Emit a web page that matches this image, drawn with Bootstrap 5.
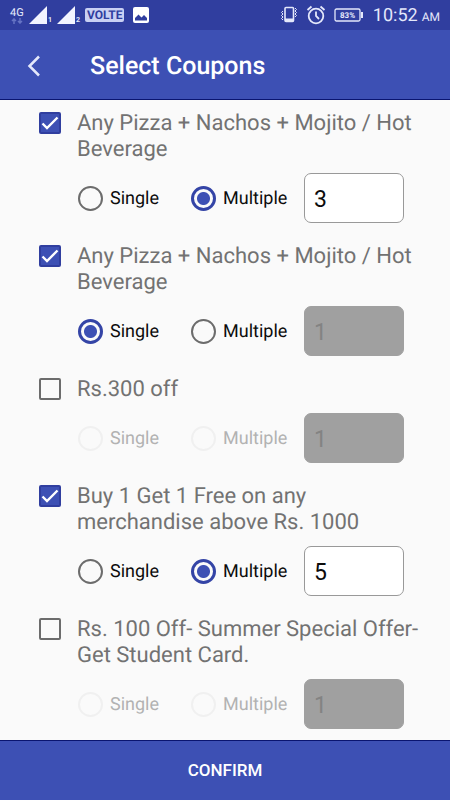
<!DOCTYPE html>
<html lang="en">
<head>
<meta charset="utf-8">
<meta name="viewport" content="width=device-width, initial-scale=1">
<title>Select Coupons</title>
<link href="https://cdn.jsdelivr.net/npm/bootstrap@5.3.0/dist/css/bootstrap.min.css" rel="stylesheet">
<style>
:root { --brand: #3d50b4; --brand-dark: #303e9f; --edge: #0a1570; --ink-soft: #727272; }
body { font-family: Roboto, "Liberation Sans", sans-serif; background: #fafafa; text-rendering: geometricPrecision; }
.statusbar { background: var(--brand-dark); height: 30px; padding: 0 10px; color: #e4e8fb; }
.statusbar svg { display: block; flex: none; }
.net { width: 15px; font-size: 11px; line-height: 11px; }
.sim { font-size: 7px; line-height: 8px; font-weight: 700; width: 6px; padding-left: 1px; }
.volte { background: #c9d0f3; color: var(--brand-dark); font-size: 12px; line-height: 14px; font-weight: 700; border-radius: 2px; padding: 0 2px; }
.clock { font-size: 18px; line-height: 24px; margin-left: 10px; gap: 4px; padding-top: 2px; }
.clock small { font-size: 12px; }
.appbar { background: var(--brand); height: 70px; border-bottom: 1px solid var(--edge); padding: 2px 22px 0; }
.back { width: 24px; height: 40px; color: #e4e8fb; }
.appbar h1 { font-size: 25px; line-height: 30px; font-weight: 500; margin-left: 44px; padding-top: 3px; }
.coupons { padding: 10px 12px 10px 39px; gap: 20px; }
.coupon { border: 0; gap: 10px; }
.offer { gap: 16px; }
.offer-name { font-size: 22px; line-height: 26px; padding-top: 1px; color: var(--ink-soft); }
.form-check-input { flex: none; margin: 0; background-color: transparent; }
.tick { width: 22px; height: 22px; margin-top: 2px; border: 2px solid #6c6c6c; }
.form-check-input.tick { border-radius: 2px; }
.tick:checked { background-color: var(--brand); border-color: var(--brand-dark);
  background-image: url("data:image/svg+xml,%3Csvg xmlns='http://www.w3.org/2000/svg' viewBox='0 0 18 18'%3E%3Cpath d='M1.5 9.5l4.5 4.5L16.500 3.500' fill='none' stroke='white' stroke-width='2.400'/%3E%3C/svg%3E"); }
.usage { padding-left: 39px; }
.choice { flex: 0 0 113px; gap: 7px; font-size: 18px; line-height: 24px; color: #0c0c0c; }
.choice label { padding-top: 2px; }
.dial { width: 25px; height: 25px; border: 2px solid #6c6c6c; }
.dial:checked { background-color: transparent; border: 3px solid #3444a6;
  background-image: radial-gradient(circle, var(--brand) 6px, transparent 7px); }
.form-check-input.dial:disabled { opacity: 1; border-color: #f0f0f0; }
.dial:disabled + label { color: #b2b2b2; }
.amount { width: 100px; height: 50px; font-size: 23px; padding: 3px 9px 0; border: 1px solid #999; border-radius: 7px; color: #0c0c0c; background: #fff; }
.amount:disabled { background: #a0a0a0; border-color: #a0a0a0; color: #838383; }
.confirm { background: var(--brand); color: #fff; height: 60px; border: 0; border-top: 1px solid var(--edge); font-size: 17px; font-weight: 500; }
</style>
<script src="https://cdn.jsdelivr.net/npm/bootstrap@5.3.0/dist/js/bootstrap.bundle.min.js"></script>
</head>
<body class="d-flex flex-column min-vh-100">
<div class="statusbar d-flex align-items-center justify-content-between">
  <div class="d-flex align-items-center">
    <div class="net">4G
      <svg width="14" height="6" viewBox="0 0 14 6" fill="none" stroke="#6674c4" stroke-width="1.500"><path d="M4 6V1M2 3l2-2 2 2M10 0v5M8 3l2 2 2-2"/></svg>
    </div>
    <div class="d-flex align-items-end ms-1"><svg width="18" height="18" viewBox="0 0 18 18"><path d="M0 18L18 0v18z" fill="#f2f4ff"/></svg><span class="sim">1</span></div>
    <div class="d-flex align-items-end ms-1"><svg width="18" height="18" viewBox="0 0 18 18"><path d="M0 18L18 0v18z" fill="#f2f4ff"/></svg><span class="sim">2</span></div>
    <span class="volte ms-1">VOLTE</span>
    <svg class="ms-2" width="18" height="18" viewBox="0 0 18 18"><rect x="1" y="1" width="16" height="16" rx="2" fill="#fff"/><path d="M3 14.500V12l3.500-3.500 3 3L12 9l3 3v2.500z" fill="#303e9f"/></svg>
  </div>
  <div class="d-flex align-items-center">
    <svg width="18" height="18" viewBox="0 0 18 18" fill="none" stroke="#e4e8fb"><rect x="5" y="1.500" width="8.500" height="14" rx="1" stroke-width="1.600"/><path d="M5 14h8.500" stroke-width="3"/><path d="M3 5L1.500 6.500 3 8l-1.500 1.500L3 11l-1.500 1.500L3 14M15 2l1.500 1.500L15 5l1.500 1.500L15 8l1.500 1.500L15 11"/></svg>
    <svg class="ms-2" width="20" height="20" viewBox="0 0 20 20" fill="none" stroke="#e4e8fb" stroke-width="1.800"><circle cx="10" cy="11" r="7.300"/><path d="M10 6.500V11l3 3M1.500 5L5.500 1.500M18.500 5l-4-3.500"/></svg>
    <svg class="ms-2" width="29" height="14" viewBox="0 0 29 14"><rect x="1" y="1" width="25" height="12" rx="1.500" fill="none" stroke="#e4e8fb" stroke-width="1.300"/><path d="M27 4h2v6h-2z" fill="#e4e8fb"/><text x="13.500" y="10" text-anchor="middle" font-family="Roboto, sans-serif" font-size="8" font-weight="700" fill="#e4e8fb">83%</text></svg>
    <div class="clock d-flex align-items-baseline"><span>10:52</span><small>AM</small></div>
  </div>
</div>
<header class="appbar d-flex align-items-center">
  <button type="button" class="back btn p-0 border-0 d-flex align-items-center justify-content-center" aria-label="Back">
    <svg width="14" height="22" viewBox="0 0 14 22" fill="none" stroke="currentColor" stroke-width="2.500"><path d="M12 1.500L2.500 11 12 20.500"/></svg>
  </button>
  <h1 class="mb-0 text-white">Select Coupons</h1>
</header>
<form class="d-flex flex-column flex-grow-1">
  <main class="coupons d-flex flex-column flex-grow-1">
    <section class="coupon d-flex flex-column">
      <div class="offer d-flex align-items-start"><input class="form-check-input tick" type="checkbox" id="c1" checked><label class="offer-name" for="c1">Any Pizza + Nachos + Mojito / Hot Beverage</label></div>
      <div class="usage d-flex align-items-center">
        <div class="choice d-flex align-items-center"><input class="form-check-input dial" type="radio" name="u1" id="s1"><label for="s1">Single</label></div>
        <div class="choice d-flex align-items-center"><input class="form-check-input dial" type="radio" name="u1" id="m1" checked><label for="m1">Multiple</label></div>
        <input class="amount" type="text" inputmode="numeric" value="3" aria-label="Quantity">
      </div>
    </section>
    <section class="coupon d-flex flex-column">
      <div class="offer d-flex align-items-start"><input class="form-check-input tick" type="checkbox" id="c2" checked><label class="offer-name" for="c2">Any Pizza + Nachos + Mojito / Hot Beverage</label></div>
      <div class="usage d-flex align-items-center">
        <div class="choice d-flex align-items-center"><input class="form-check-input dial" type="radio" name="u2" id="s2" checked><label for="s2">Single</label></div>
        <div class="choice d-flex align-items-center"><input class="form-check-input dial" type="radio" name="u2" id="m2"><label for="m2">Multiple</label></div>
        <input class="amount" type="text" inputmode="numeric" value="1" aria-label="Quantity" disabled>
      </div>
    </section>
    <section class="coupon d-flex flex-column">
      <div class="offer d-flex align-items-start"><input class="form-check-input tick" type="checkbox" id="c3"><label class="offer-name" for="c3">Rs.300 off</label></div>
      <div class="usage d-flex align-items-center">
        <div class="choice d-flex align-items-center"><input class="form-check-input dial" type="radio" name="u3" id="s3" disabled><label for="s3">Single</label></div>
        <div class="choice d-flex align-items-center"><input class="form-check-input dial" type="radio" name="u3" id="m3" disabled><label for="m3">Multiple</label></div>
        <input class="amount" type="text" inputmode="numeric" value="1" aria-label="Quantity" disabled>
      </div>
    </section>
    <section class="coupon d-flex flex-column">
      <div class="offer d-flex align-items-start"><input class="form-check-input tick" type="checkbox" id="c4" checked><label class="offer-name" for="c4">Buy 1 Get 1 Free on any merchandise above Rs. 1000</label></div>
      <div class="usage d-flex align-items-center">
        <div class="choice d-flex align-items-center"><input class="form-check-input dial" type="radio" name="u4" id="s4"><label for="s4">Single</label></div>
        <div class="choice d-flex align-items-center"><input class="form-check-input dial" type="radio" name="u4" id="m4" checked><label for="m4">Multiple</label></div>
        <input class="amount" type="text" inputmode="numeric" value="5" aria-label="Quantity">
      </div>
    </section>
    <section class="coupon d-flex flex-column">
      <div class="offer d-flex align-items-start"><input class="form-check-input tick" type="checkbox" id="c5"><label class="offer-name" for="c5">Rs. 100 Off- Summer Special Offer- Get Student Card.</label></div>
      <div class="usage d-flex align-items-center">
        <div class="choice d-flex align-items-center"><input class="form-check-input dial" type="radio" name="u5" id="s5" disabled><label for="s5">Single</label></div>
        <div class="choice d-flex align-items-center"><input class="form-check-input dial" type="radio" name="u5" id="m5" disabled><label for="m5">Multiple</label></div>
        <input class="amount" type="text" inputmode="numeric" value="1" aria-label="Quantity" disabled>
      </div>
    </section>
  </main>
  <button type="button" class="confirm w-100">CONFIRM</button>
</form>
</body>
</html>
